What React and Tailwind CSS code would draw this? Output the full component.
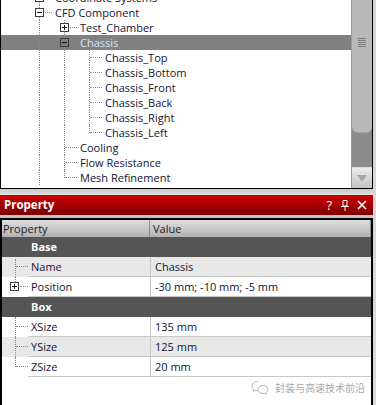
import React from 'react';

const dot = 'border-[#8a8a8a] border-dotted';

// one 25px indentation cell of the tree guides
const Guide = ({ t }) => {
  if (t === 'v') {
    return (
      <div className="relative w-[25px] h-full shrink-0">
        <div className={`absolute left-[12px] top-0 bottom-0 border-l ${dot}`} />
      </div>
    );
  }
  if (t === 'j' || t === 'l') {
    return (
      <div className="relative w-[25px] h-full shrink-0">
        <div className={`absolute left-[12px] top-0 border-l ${dot} ${t === 'j' ? 'bottom-0' : 'h-[8px]'}`} />
        <div className={`absolute left-[13px] right-0 top-[7px] border-t ${dot}`} />
      </div>
    );
  }
  // expand box
  return (
    <div className="relative w-[25px] h-full shrink-0">
      <div className={`absolute left-[12px] top-0 h-[3px] border-l ${dot}`} />
      <div className={`absolute left-[12px] top-[12px] bottom-0 border-l ${dot}`} />
      <div className="absolute left-[8px] top-[3px] w-[9px] h-[9px] border border-[#3c3c3c]">
        <div className="absolute left-[1px] top-[3px] w-[5px] h-px bg-[#111]" />
        {t === '+' && <div className="absolute left-[3px] top-[1px] w-px h-[5px] bg-[#111]" />}
      </div>
      <div className={`absolute left-[18px] right-0 top-[7px] border-t ${dot}`} />
    </div>
  );
};

const tree = [
  { label: 'Coordinate Systems', g: ['+'] },
  { label: 'CFD Component', g: ['-'] },
  { label: 'Test_Chamber', g: ['v', '+'] },
  { label: 'Chassis', g: ['v', '-'], sel: true },
  { label: 'Chassis_Top', g: ['v', 'v', 'j'] },
  { label: 'Chassis_Bottom', g: ['v', 'v', 'j'] },
  { label: 'Chassis_Front', g: ['v', 'v', 'j'] },
  { label: 'Chassis_Back', g: ['v', 'v', 'j'] },
  { label: 'Chassis_Right', g: ['v', 'v', 'j'] },
  { label: 'Chassis_Left', g: ['v', 'v', 'l'] },
  { label: 'Cooling', g: ['v', 'j'] },
  { label: 'Flow Resistance', g: ['v', 'j'] },
  { label: 'Mesh Refinement', g: ['v', 'l'] },
];

const Scrollbar = () => (
  <div className="w-[21px] shrink-0 flex flex-col bg-[#8c8c8c] border-l border-[#9a9a9a]">
    <div className="h-[133px] bg-[#b9b9b9] rounded-b-[6px] border-b border-[#a2a2a2] flex flex-col items-center pt-[38px] gap-px">
      {[0, 1, 2, 3, 4].map(i => (
        <div key={i} className="w-[8px] h-px bg-[#7e7e7e]" />
      ))}
    </div>
    <div className="flex-1" />
    <div className="h-[21px] bg-gradient-to-b from-[#ececec] to-[#c4c4c4] border-t border-[#dcdcdc] flex items-center justify-center">
      <svg width="10" height="7" viewBox="0 0 10 7">
        <path d="M0 0 H10 L5 7 Z" fill="#a8a8a8" />
      </svg>
    </div>
  </div>
);

const PropRow = ({ name, value, bg, gutter }) => (
  <div className={`flex h-[20px] ${bg}`}>
    <div className="relative w-[26px] shrink-0">{gutter}</div>
    <div className="w-[123px] shrink-0 border-b border-r border-[#c8c8c8] pl-[3px] leading-[19px]">{name}</div>
    <div className="flex-1 border-b border-[#c8c8c8] pl-[4px] leading-[19px]">{value}</div>
  </div>
);

const Category = ({ label }) => (
  <div className="h-[20px] bg-[#555555] text-white font-bold pl-[29px] leading-[19px]">{label}</div>
);

export default function App() {
  return (
    <div className="w-[376px] h-[405px] overflow-hidden bg-[#d8d8d8] relative font-['Open_Sans',sans-serif] text-[11px] text-[#141432]">
      <div className="w-[373px]">
        {/* object tree */}
        <div className="h-[189px] flex border-l border-r border-b border-black bg-white">
          <div className="flex-1 overflow-hidden">
            <div className="-mt-[10px]">
              {tree.map(r => (
                <div key={r.label} className={`flex h-[15px] items-stretch ${r.sel ? 'bg-[#808080] text-[#dceaf6]' : ''}`}>
                  <div className="w-[26px] shrink-0" />
                  {r.g.map((t, i) => <Guide key={i} t={t} />)}
                  <span className="ml-[3px] leading-[15px] whitespace-nowrap">{r.label}</span>
                </div>
              ))}
            </div>
          </div>
          <Scrollbar />
        </div>

        <div className="h-[6px] bg-gradient-to-b from-[#c8c8c8] to-[#e2e2e2]" />

        {/* dock title */}
        <div className="h-[20px] flex items-center bg-gradient-to-b from-[#cf0000] to-[#7c0000] text-white">
          <span className="font-bold text-[11.5px] pl-[4px] flex-1">Property</span>
          <span className="text-[13px] leading-none mr-[9px]">?</span>
          <svg width="8" height="11" viewBox="0 0 8 11" className="mr-[8px]">
            <path d="M2 0.5 H6 V6 H2 Z" fill="none" stroke="#fff" />
            <path d="M0 6.5 H8 M4 6.5 V11" stroke="#fff" />
          </svg>
          <svg width="10" height="10" viewBox="0 0 10 10" className="mr-[6px]">
            <path d="M1 1 L9 9 M9 1 L1 9" stroke="#fff" strokeWidth="1.6" />
          </svg>
        </div>

        <div className="h-[3px] bg-[#c4c4c4]" />

        {/* property grid */}
        <div className="h-[187px] border-l-2 border-t-2 border-r-2 border-black bg-white">
          <div className="flex h-[17px] bg-gradient-to-b from-[#dedede] to-[#b2b2b2] leading-[17px] text-[#1c1c1c]">
            <div className="w-[148px] shrink-0 pl-[1px] border-r border-[#8e8e8e]">Property</div>
            <div className="flex-1 pl-[3px] border-r border-[#8e8e8e]">Value</div>
          </div>
          <Category label="Base" />
          <PropRow
            name="Name"
            value="Chassis"
            bg="bg-[#e8e8e8]"
            gutter={
              <>
                <div className={`absolute left-[13px] top-[2px] bottom-0 border-l ${dot}`} />
                <div className={`absolute left-[14px] right-0 top-[9px] border-t ${dot}`} />
              </>
            }
          />
          <PropRow
            name="Position"
            value="-30 mm; -10 mm; -5 mm"
            bg="bg-white"
            gutter={
              <>
                <div className={`absolute left-[13px] top-0 h-[5px] border-l ${dot}`} />
                <div className="absolute left-[8px] top-[5px] w-[9px] h-[9px] border border-[#3c3c3c]">
                  <div className="absolute left-[1px] top-[3px] w-[5px] h-px bg-[#111]" />
                  <div className="absolute left-[3px] top-[1px] w-px h-[5px] bg-[#111]" />
                </div>
                <div className={`absolute left-[18px] right-0 top-[9px] border-t ${dot}`} />
              </>
            }
          />
          <Category label="Box" />
          {[
            ['XSize', '135 mm', 'bg-white', true],
            ['YSize', '125 mm', 'bg-[#e8e8e8]', true],
            ['ZSize', '20 mm', 'bg-white', false],
          ].map(([n, v, bg, more]) => (
            <PropRow
              key={n}
              name={n}
              value={v}
              bg={bg}
              gutter={
                <>
                  <div className={`absolute left-[13px] top-0 border-l ${dot} ${more ? 'bottom-0' : 'h-[10px]'}`} />
                  <div className={`absolute left-[14px] right-0 top-[9px] border-t ${dot}`} />
                </>
              }
            />
          ))}
        </div>
      </div>

      {/* watermark */}
      <div className="absolute left-[251px] top-[380px] flex items-center gap-[6px] text-[#a9a9a9]">
        <svg width="18" height="15" viewBox="0 0 18 15" fill="none" stroke="#b4b4b4" strokeWidth="1">
          <path d="M7 1.5 C3.5 1.5 1 3.6 1 6.2 C1 7.7 1.8 8.9 3 9.7 L2.6 11.5 L4.6 10.4 C5.3 10.6 6.1 10.8 7 10.8" />
          <path d="M12 5.5 C9.2 5.5 7 7.3 7 9.5 C7 11.7 9.2 13.5 12 13.5 C12.6 13.5 13.1 13.4 13.6 13.3 L15.4 14.3 L15 12.7 C16.2 11.9 17 10.8 17 9.5 C17 7.3 14.8 5.5 12 5.5 Z" />
        </svg>
        <span className="font-['Noto_Sans_CJK_SC',sans-serif] text-[10px] leading-none">封装与高速技术前沿</span>
      </div>
    </div>
  );
}
